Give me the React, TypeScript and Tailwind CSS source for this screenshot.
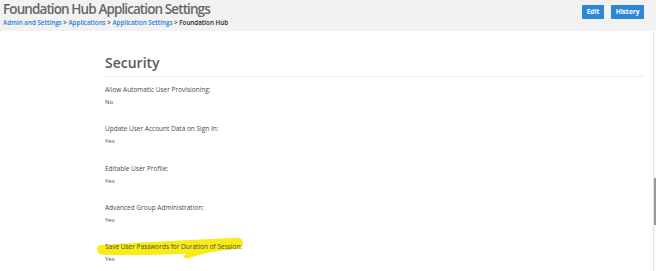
import React from 'react'

const settings = [
  { label: 'Allow Automatic User Provisioning:', value: 'No' },
  { label: 'Update User Account Data on Sign In:', value: 'Yes' },
  { label: 'Editable User Profile:', value: 'Yes' },
  { label: 'Advanced Group Administration:', value: 'Yes' },
  { label: 'Save User Passwords for Duration of Session:', value: 'Yes', highlight: true },
]

const crumbs = ['Admin and Settings', 'Applications', 'Application Settings']

function Highlight() {
  return (
    <svg
      className="absolute left-[-11px] top-[-8px] w-[155px] h-[30px] pointer-events-none"
      viewBox="0 0 165 30"
    >
      <path
        d="M6,11 C40,8 110,5 154,3 C160,4 160,13 154,15 C130,16 116,20 100,25 C94,26 95,21 99,20 C70,21 40,22 8,21 C2,20 2,12 6,11 Z"
        fill="#f8ec16"
      />
    </svg>
  )
}

export default function App() {
  return (
    <div className="w-[656px] h-[271px] overflow-hidden bg-white flex flex-col font-['Open_Sans',sans-serif]">
      {/* Header */}
      <div className="h-[31px] shrink-0 bg-[#f2f2f2] flex justify-between pl-[3px] pr-[12px]">
        <div>
          <h1 className="text-[13.5px] leading-[16px] pt-[1px] font-semibold tracking-[-0.9px] text-[#676767]">
            Foundation Hub Application Settings
          </h1>
          <div className="text-[6.25px] leading-[9px] mt-[1px] font-semibold text-[#222]">
            {crumbs.map((c) => (
              <span key={c}>
                <a className="text-[#1f7fd1]">{c}</a>
                <span className="text-[#444]"> &gt; </span>
              </span>
            ))}
            <span>Foundation Hub</span>
          </div>
        </div>
        <div className="flex gap-[7px] pt-[5px]">
          <button className="h-[14px] w-[22px] rounded-[1px] bg-[#2e87d6] text-white text-[6.5px] font-bold leading-none">
            Edit
          </button>
          <button className="h-[14px] w-[33px] rounded-[1px] bg-[#2e87d6] text-white text-[6.5px] font-bold leading-none">
            History
          </button>
        </div>
      </div>

      {/* Body */}
      <div className="flex flex-1">
        <div className="flex-1 pl-[105px] pr-[9px]">
          <h2 className="text-[14px] leading-[20px] pt-[22px] pb-[3px] font-semibold text-[#5a5a5a] border-b border-[#eeeeee]">
            Security
          </h2>
          <div className="pt-[8px]">
            {settings.map((s) => (
              <div key={s.label} className="h-[39.3px] text-[#4a4a4a]">
                <div className="relative text-[6.5px] leading-[10px]">
                  {s.highlight && <Highlight />}
                  <span className="relative">{s.label}</span>
                </div>
                <div className="text-[6px] leading-[8px] mt-[3px] text-[#444]">{s.value}</div>
              </div>
            ))}
          </div>
        </div>
        {/* scrollbar */}
        <div className="w-[3px] border-l border-[#e2e2e2] bg-[#fafafa] pt-[147px]">
          <div className="h-[47px] w-[2px] bg-[#9a9a9a]" />
        </div>
      </div>
    </div>
  )
}
